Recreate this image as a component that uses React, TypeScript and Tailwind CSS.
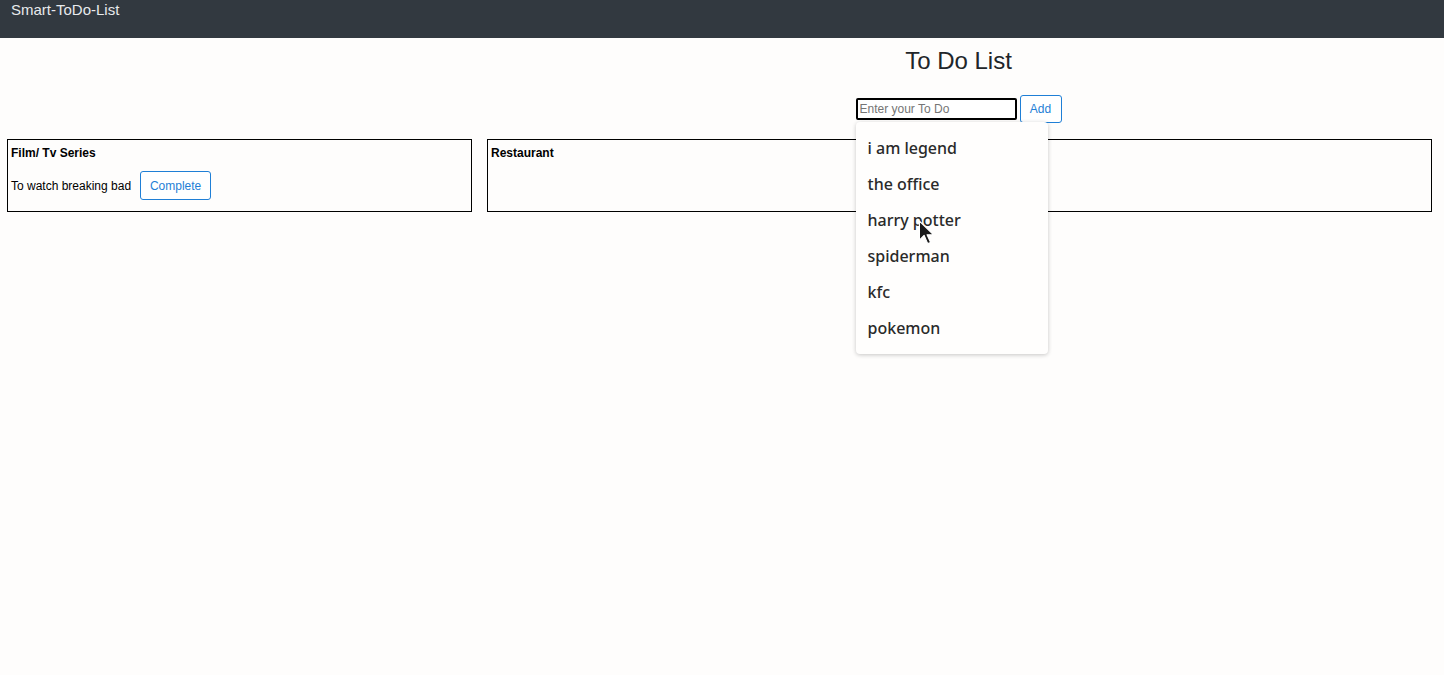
import React from 'react'

const suggestions = ['i am legend', 'the office', 'harry potter', 'spiderman', 'kfc', 'pokemon']

function Cursor() {
  return (
    <svg
      className="absolute left-[918px] top-[220px] z-20 pointer-events-none"
      width="17"
      height="26"
      viewBox="0 0 14 22"
    >
      <path
        d="M1 1 L1 17 L5 13 L8 20 L10.5 19 L7.5 12.5 L13 12.5 Z"
        fill="#1a1a1a"
        stroke="#ffffff"
        strokeWidth="1"
        strokeLinejoin="round"
      />
    </svg>
  )
}

export default function App() {
  return (
    <div
      className="relative min-h-[675px] bg-[#fefdfc] text-[#212529]"
      style={{ fontFamily: '"Liberation Sans", Arial, sans-serif' }}
    >
      {/* Navbar */}
      <nav className="h-[38px] bg-[#323940] px-[11px] pt-[1px]">
        <span className="block text-[15px] leading-[18px] text-[#e8eaec]">Smart-ToDo-List</span>
      </nav>

      <div className="grid grid-cols-[465px_945px] gap-x-[15px] pl-[7px]">
        {/* Header over the second column */}
        <div className="col-start-2 flex flex-col items-center pr-[2px]">
          <h1 className="mt-[8px] text-[24px] leading-[30px] text-[#212529]">To Do List</h1>
          <div className="relative mt-[19px] flex items-center">
            <input
              placeholder="Enter your To Do"
              className="h-[22px] w-[161px] rounded-[2px] border-2 border-black bg-white px-[2px] text-[12px] text-black outline-none placeholder:text-[#757575]"
            />
            <button className="ml-[3px] h-[28px] w-[42px] rounded-[3px] border border-[#1f7fd6] bg-white text-[12px] text-[#1f7fd6]">
              Add
            </button>

            {/* Suggestions dropdown */}
            <ul
              className="absolute left-0 top-[27px] z-10 w-[192px] rounded-[4px] bg-[#fffefd] py-[8px] shadow-[0_1px_4px_rgba(0,0,0,0.22)]"
              style={{ fontFamily: '"Noto Sans", "Open Sans", sans-serif' }}
            >
              {suggestions.map((s) => (
                <li
                  key={s}
                  className="flex h-[36px] items-center px-[12px] text-[16px] font-medium text-[#2a2a2a]"
                >
                  {s}
                </li>
              ))}
            </ul>
          </div>
        </div>

        {/* Category cards */}
        <div className="mt-[16px] h-[73px] border border-black px-[3px] pt-[6px]">
          <h5 className="text-[12px] font-bold leading-[14px] text-black">Film/ Tv Series</h5>
          <div className="mt-[11px] flex items-center">
            <span className="text-[12px] text-black">To watch breaking bad</span>
            <button className="ml-[9px] h-[29px] w-[71px] rounded-[3px] border border-[#1f7fd6] bg-white text-[12px] text-[#1f7fd6]">
              Complete
            </button>
          </div>
        </div>
        <div className="mt-[16px] h-[73px] border border-black px-[3px] pt-[6px]">
          <h5 className="text-[12px] font-bold leading-[14px] text-black">Restaurant</h5>
        </div>
      </div>

      <Cursor />
    </div>
  )
}
